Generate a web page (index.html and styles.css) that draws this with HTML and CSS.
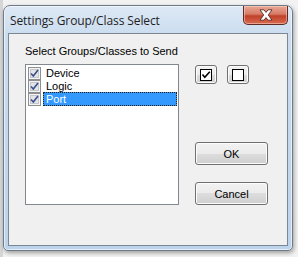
FILE: index.html
```html
<!DOCTYPE html>
<html lang="en">
<head>
    <meta charset="UTF-8">
    <title>Settings Group/Class Select</title>
    <link rel="stylesheet" href="styles.css">
</head>
<body>
    <div class="window">
        <div class="titlebar">
            <span class="title">Settings Group/Class Select</span>
            <button class="close-btn">
                <svg width="16" height="12" viewBox="0 0 16 12">
                    <path d="M2 0.8 L6 0.8 L8 3.4 L10 0.8 L14 0.8 L10.3 6 L14 11.2 L10 11.2 L8 8.6 L6 11.2 L2 11.2 L5.7 6 Z" fill="#fff" stroke="#5a2c26" stroke-width="0.9"/>
                </svg>
            </button>
        </div>
        <div class="client">
            <div class="left-col">
                <div class="caption">Select Groups/Classes to Send</div>
                <div class="listbox">
                    <div class="item">
                        <span class="chk"><svg width="13" height="13" viewBox="0 0 13 13"><rect x="0.5" y="0.5" width="12" height="12" fill="#f4f4f4" stroke="#8e8f8f"/><rect x="2.5" y="2.5" width="8" height="8" fill="#e2e4e8" stroke="#c4c8cc"/><path d="M3 6.5 L5.3 9 L10 3" fill="none" stroke="#3b4f8c" stroke-width="1.6"/></svg></span>
                        <span class="label">Device</span>
                    </div>
                    <div class="item">
                        <span class="chk"><svg width="13" height="13" viewBox="0 0 13 13"><rect x="0.5" y="0.5" width="12" height="12" fill="#f4f4f4" stroke="#8e8f8f"/><rect x="2.5" y="2.5" width="8" height="8" fill="#e2e4e8" stroke="#c4c8cc"/><path d="M3 6.5 L5.3 9 L10 3" fill="none" stroke="#3b4f8c" stroke-width="1.6"/></svg></span>
                        <span class="label">Logic</span>
                    </div>
                    <div class="item">
                        <span class="chk"><svg width="13" height="13" viewBox="0 0 13 13"><rect x="0.5" y="0.5" width="12" height="12" fill="#f4f4f4" stroke="#8e8f8f"/><rect x="2.5" y="2.5" width="8" height="8" fill="#e2e4e8" stroke="#c4c8cc"/><path d="M3 6.5 L5.3 9 L10 3" fill="none" stroke="#3b4f8c" stroke-width="1.6"/></svg></span>
                        <span class="label selected">Port</span>
                    </div>
                </div>
            </div>
            <div class="right-col">
                <div class="tool-row">
                    <button class="btn tool-btn">
                        <svg width="12" height="12" viewBox="0 0 12 12"><rect x="0.5" y="0.5" width="11" height="11" fill="#fff" stroke="#000"/><path d="M2.5 5.5 L4.8 8.2 L9.8 2.8" fill="none" stroke="#000" stroke-width="1.6"/></svg>
                    </button>
                    <button class="btn tool-btn">
                        <svg width="12" height="12" viewBox="0 0 12 12"><rect x="0.5" y="0.5" width="11" height="11" fill="#fff" stroke="#000"/></svg>
                    </button>
                </div>
                <button class="btn push-btn ok-btn">OK</button>
                <button class="btn push-btn">Cancel</button>
            </div>
        </div>
    </div>
</body>
</html>
```

FILE: styles.css
```css
body {
    margin: 0;
    padding: 5px 0 0 3px;
    height: 257px;
    box-sizing: border-box;
    background: linear-gradient(90deg, #d6d6d6 0, #d6d6d6 3px, #f2f2f2 3px);
    font-family: 'Liberation Sans', Arial, sans-serif;
    overflow: hidden;
}
.window {
    width: 290px;
    height: 246px;
    box-sizing: border-box;
    border: 1px solid #6d7a88;
    border-radius: 7px 7px 5px 5px;
    background: linear-gradient(180deg, #dde9f5 0, #cadcef 30px, #bcd3ec 100%);
    box-shadow: 1px 2px 4px rgba(0,0,0,0.35), inset 0 0 0 1px rgba(255,255,255,0.6);
    padding: 0 4px 4px 4px;
    display: flex;
    flex-direction: column;
}
.titlebar {
    height: 27px;
    display: flex;
    align-items: flex-start;
}
.title {
    font-family: 'Open Sans', 'Noto Sans', sans-serif;
    font-size: 12px;
    color: #1e1e1e;
    margin: 6px 0 0 2px;
    letter-spacing: -0.1px;
}
.close-btn {
    margin-left: auto;
    margin-right: 0;
    width: 45px;
    height: 19px;
    border: 1px solid #5e2a24;
    border-top: none;
    border-radius: 0 0 5px 5px;
    background: linear-gradient(180deg, #e9a894 0, #d67c67 45%, #c0412a 55%, #d86a4f 100%);
    box-shadow: inset 0 0 0 1px rgba(255,220,210,0.5);
    padding: 0;
    display: flex;
    align-items: center;
    justify-content: center;
}
.client {
    flex: 1;
    background: #f0f0f0;
    border: 1px solid #7c8796;
    display: flex;
    padding: 11px 0 0 16px;
}
.left-col {
    width: 154px;
    display: flex;
    flex-direction: column;
}
.caption {
    font-size: 11px;
    color: #000;
    height: 19px;
    line-height: 13px;
    white-space: nowrap;
}
.listbox {
    height: 141px;
    box-sizing: border-box;
    background: #fff;
    border: 1px solid #828790;
    padding: 1px 1px 0 2px;
}
.item {
    height: 13px;
    display: flex;
    align-items: center;
}
.chk {
    width: 13px;
    height: 13px;
    display: block;
}
.label {
    font-size: 11px;
    line-height: 12px;
    height: 12px;
    padding: 0 2px;
    margin-left: 2px;
    color: #000;
    flex: 1;
    border: 1px solid transparent;
}
.label.selected {
    background: #3399ff;
    color: #fff;
    border: 1px dotted #2a1d0a;
}
.right-col {
    margin-left: 16px;
    display: flex;
    flex-direction: column;
    padding-top: 20px;
}
.tool-row {
    display: flex;
    gap: 10px;
    margin-bottom: 58px;
}
.btn {
    box-sizing: border-box;
    border: 1px solid #707070;
    border-radius: 3px;
    background: linear-gradient(180deg, #f2f2f2 0, #ebebeb 50%, #dddddd 50%, #cfcfcf 100%);
    box-shadow: inset 0 0 0 1px #fcfcfc;
    padding: 0;
    font-family: 'Liberation Sans', Arial, sans-serif;
    font-size: 11px;
    color: #000;
}
.tool-btn {
    width: 22px;
    height: 19px;
    display: flex;
    align-items: center;
    justify-content: center;
}
.push-btn {
    width: 73px;
    height: 23px;
}
.ok-btn {
    margin-bottom: 17px;
}
```
